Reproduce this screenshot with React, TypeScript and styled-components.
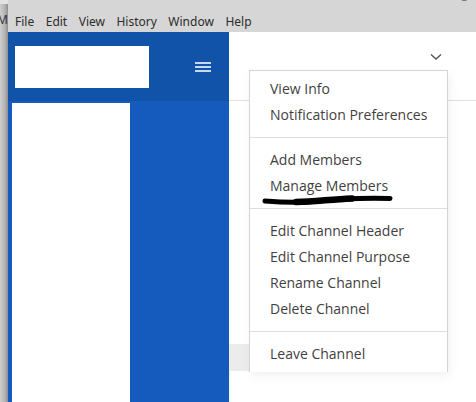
import styled, { createGlobalStyle } from "styled-components";

const GlobalStyle = createGlobalStyle`
  html, body {
    margin: 0;
    padding: 0;
    background: #ffffff;
  }
  * {
    box-sizing: border-box;
  }
`;

const Screen = styled.div`
  position: relative;
  display: flex;
  width: 476px;
  height: 402px;
  overflow: hidden;
`;

const LeftEdge = styled.div`
  position: relative;
  width: 8px;
  flex: none;
  overflow: hidden;
  background: linear-gradient(to right, #cfcfcf, #b4b4b4 60%, #8e8e8e);
  border-top: 4px solid #e2e2e2;
`;

const EdgeGlyph = styled.span`
  position: absolute;
  top: 7px;
  left: -3px;
  font-family: "Noto Sans", sans-serif;
  font-size: 12px;
  color: #333;
`;

const AppWindow = styled.div`
  display: flex;
  flex-direction: column;
  flex: 1;
  min-width: 0;
`;

const TitleStrip = styled.div`
  position: relative;
  height: 12px;
  background: #d6d6d6;
  overflow: hidden;
`;

const TitleText = styled.span`
  position: absolute;
  right: -6px;
  top: -16px;
  font-family: "Noto Sans", sans-serif;
  font-size: 13px;
  color: #7a7a7a;
`;

const MenuBar = styled.div`
  display: flex;
  align-items: center;
  gap: 11.5px;
  height: 20px;
  padding-left: 7px;
  background: #d6d6d6;
  font-family: "Noto Sans", sans-serif;
  font-size: 12px;
  color: #2c2c2c;
`;

const MenuBarItem = styled.span`
  line-height: 20px;
`;

const Body = styled.div`
  display: flex;
  flex: 1;
  min-height: 0;
`;

const Sidebar = styled.div`
  display: flex;
  flex-direction: column;
  width: 221px;
  flex: none;
`;

const SidebarHeader = styled.div`
  display: flex;
  align-items: center;
  justify-content: space-between;
  height: 69px;
  padding: 0 18px 0 7px;
  background: #1153a9;
`;

const LogoBox = styled.div`
  width: 134px;
  height: 42px;
  background: #ffffff;
`;

const Hamburger = styled.div`
  display: flex;
  flex-direction: column;
  gap: 2px;
  width: 16px;
`;

const HamburgerLine = styled.span`
  height: 2px;
  background: #c9d8ef;
`;

const SidebarBody = styled.div`
  flex: 1;
  padding: 2px 0 0 4px;
  background: #155bbd;
`;

const ChannelList = styled.div`
  width: 118px;
  height: 100%;
  background: #ffffff;
`;

const Main = styled.div`
  position: relative;
  display: flex;
  flex-direction: column;
  flex: 1;
  background: #ffffff;
`;

const ChannelHeader = styled.div`
  display: flex;
  justify-content: flex-end;
  height: 69px;
  padding: 21px 34px 0 0;
  border-bottom: 1px solid #e0e0e0;
`;

const Filler = styled.div`
  flex: none;
  height: 243px;
`;

const InputBar = styled.div`
  width: 100px;
  height: 27px;
  background: #ececec;
`;

const Footer = styled.div`
  flex: 1;
  border-left: 1px solid #f0f0f0;
`;

const Dropdown = styled.div`
  position: absolute;
  top: 38px;
  left: 20px;
  width: 199px;
  height: 302px;
  overflow: hidden;
  padding-top: 5px;
  background: #ffffff;
  border: 1px solid #d4d4d4;
  border-bottom: none;
  box-shadow: 2px 4px 10px rgba(0, 0, 0, 0.06);
  font-family: "Open Sans", sans-serif;
  font-size: 14px;
  color: #3f3f3f;
`;

const DropdownItem = styled.div`
  height: 26px;
  line-height: 26px;
  padding-left: 20px;
  white-space: nowrap;
`;

const Divider = styled.div`
  height: 1px;
  margin: 9px 0;
  background: #dddddd;
`;

const Scribble = styled.svg`
  position: absolute;
  left: 0;
  top: 0;
  pointer-events: none;
`;

const groups = [
  ["View Info", "Notification Preferences"],
  ["Add Members", "Manage Members"],
  ["Edit Channel Header", "Edit Channel Purpose", "Rename Channel", "Delete Channel"],
  ["Leave Channel"],
];

export default function App() {
  return (
    <>
      <GlobalStyle />
      <Screen>
        <LeftEdge>
          <EdgeGlyph>M</EdgeGlyph>
        </LeftEdge>
        <AppWindow>
          <TitleStrip>
            <TitleText>Direct Messages</TitleText>
          </TitleStrip>
          <MenuBar>
            {["File", "Edit", "View", "History", "Window", "Help"].map((m) => (
              <MenuBarItem key={m}>{m}</MenuBarItem>
            ))}
          </MenuBar>
          <Body>
            <Sidebar>
              <SidebarHeader>
                <LogoBox />
                <Hamburger>
                  <HamburgerLine />
                  <HamburgerLine />
                  <HamburgerLine />
                </Hamburger>
              </SidebarHeader>
              <SidebarBody>
                <ChannelList />
              </SidebarBody>
            </Sidebar>
            <Main>
              <ChannelHeader>
                <svg width="12" height="8" viewBox="0 0 12 8">
                  <path d="M1 1.5 L6 6 L11 1.5" fill="none" stroke="#555" strokeWidth="1.4" />
                </svg>
              </ChannelHeader>
              <Filler />
              <InputBar />
              <Footer />
              <Dropdown>
                {groups.map((g, i) => (
                  <div key={i}>
                    {i > 0 && <Divider />}
                    {g.map((item) => (
                      <DropdownItem key={item}>{item}</DropdownItem>
                    ))}
                  </div>
                ))}
              </Dropdown>
            </Main>
          </Body>
        </AppWindow>
        <Scribble width="476" height="402" viewBox="0 0 476 402">
          <path
            d="M265 201 C 285 202.5, 300 203, 318 201 S 362 198, 390 198.5"
            fill="none"
            stroke="#000"
            strokeWidth="5"
            strokeLinecap="round"
          />
          <path
            d="M296 202 C 315 201.5, 330 199.5, 352 198.5"
            fill="none"
            stroke="#000"
            strokeWidth="6.5"
            strokeLinecap="round"
          />
        </Scribble>
      </Screen>
    </>
  );
}
